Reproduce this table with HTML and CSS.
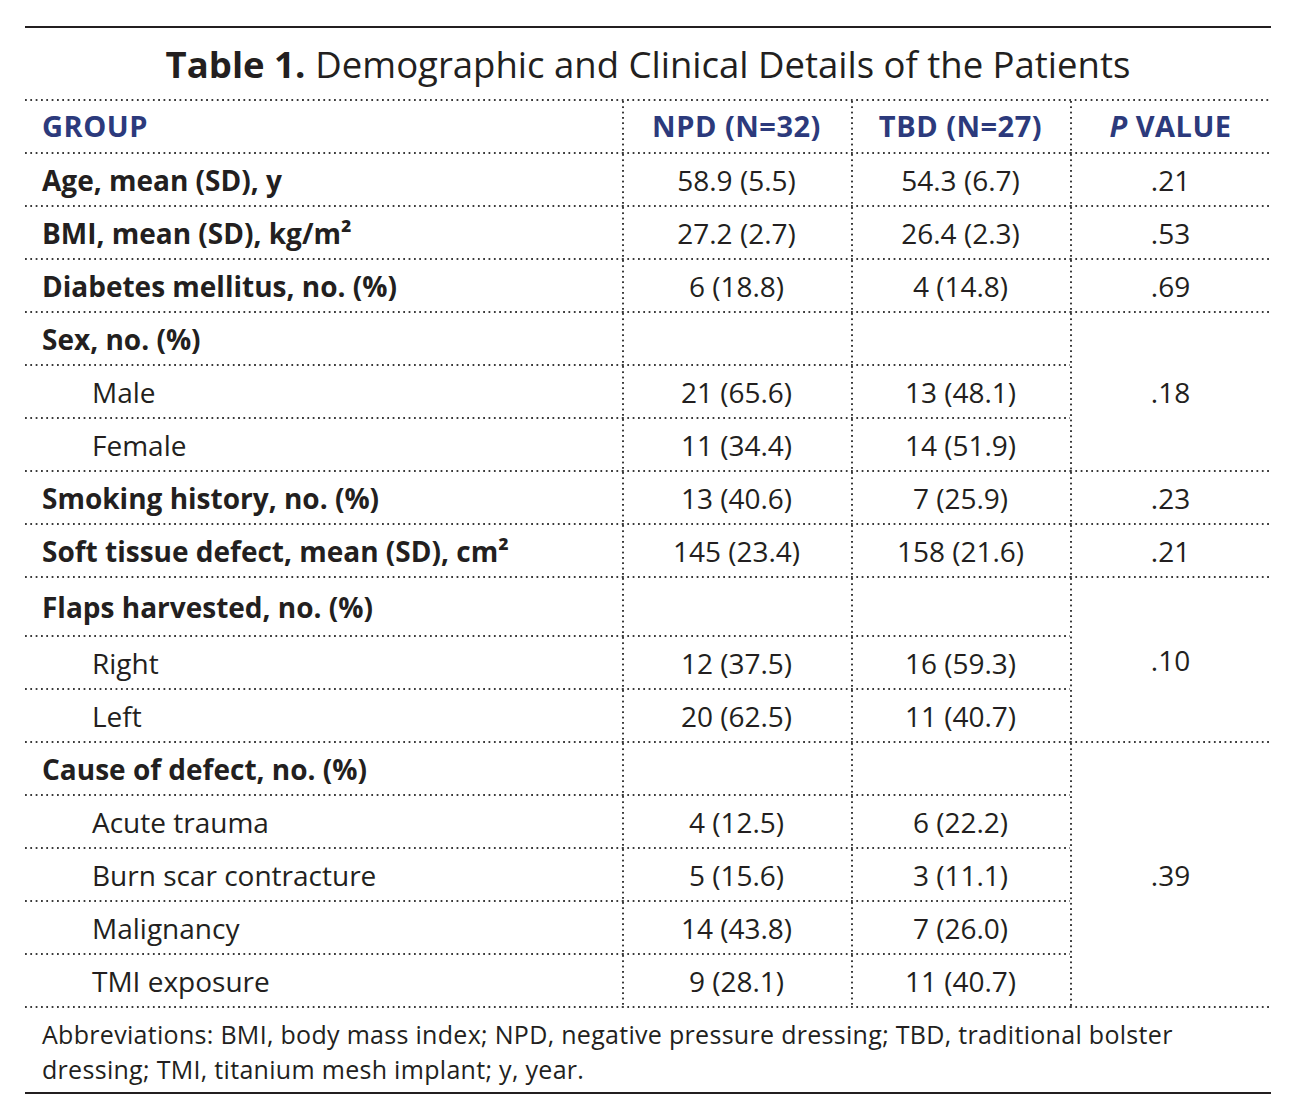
FILE: index.html
```html
<!DOCTYPE html>
<html lang="en">
<head>
<meta charset="utf-8">
<title>Table 1</title>
<link rel="stylesheet" href="styles.css">
</head>
<body>
<div class="page">
  <div class="rule"></div>
  <h1 class="title"><b>Table 1.</b> Demographic and Clinical Details of the Patients</h1>
  <table class="data">
    <colgroup>
      <col class="c-label">
      <col class="c-npd">
      <col class="c-tbd">
      <col class="c-p">
    </colgroup>
    <thead>
      <tr>
        <th class="label">GROUP</th>
        <th class="val vl">NPD (N=32)</th>
        <th class="val vl">TBD (N=27)</th>
        <th class="val vl"><i>P</i> VALUE</th>
      </tr>
    </thead>
    <tbody>
      <tr><td class="label b">Age, mean (SD), y</td><td class="val vl">58.9 (5.5)</td><td class="val vl">54.3 (6.7)</td><td class="val vl">.21</td></tr>
      <tr><td class="label b">BMI, mean (SD), kg/m²</td><td class="val vl">27.2 (2.7)</td><td class="val vl">26.4 (2.3)</td><td class="val vl">.53</td></tr>
      <tr><td class="label b">Diabetes mellitus, no. (%)</td><td class="val vl">6 (18.8)</td><td class="val vl">4 (14.8)</td><td class="val vl">.69</td></tr>
      <tr><td class="label b">Sex, no. (%)</td><td class="val vl"></td><td class="val vl"></td><td class="val vl" rowspan="3">.18</td></tr>
      <tr><td class="label sub">Male</td><td class="val vl">21 (65.6)</td><td class="val vl">13 (48.1)</td></tr>
      <tr><td class="label sub">Female</td><td class="val vl">11 (34.4)</td><td class="val vl">14 (51.9)</td></tr>
      <tr><td class="label b">Smoking history, no. (%)</td><td class="val vl">13 (40.6)</td><td class="val vl">7 (25.9)</td><td class="val vl">.23</td></tr>
      <tr><td class="label b">Soft tissue defect, mean (SD), cm²</td><td class="val vl">145 (23.4)</td><td class="val vl">158 (21.6)</td><td class="val vl">.21</td></tr>
      <tr class="tall"><td class="label b">Flaps harvested, no. (%)</td><td class="val vl"></td><td class="val vl"></td><td class="val vl" rowspan="3">.10</td></tr>
      <tr><td class="label sub">Right</td><td class="val vl">12 (37.5)</td><td class="val vl">16 (59.3)</td></tr>
      <tr><td class="label sub">Left</td><td class="val vl">20 (62.5)</td><td class="val vl">11 (40.7)</td></tr>
      <tr><td class="label b">Cause of defect, no. (%)</td><td class="val vl"></td><td class="val vl"></td><td class="val vl" rowspan="5">.39</td></tr>
      <tr><td class="label sub">Acute trauma</td><td class="val vl">4 (12.5)</td><td class="val vl">6 (22.2)</td></tr>
      <tr><td class="label sub">Burn scar contracture</td><td class="val vl">5 (15.6)</td><td class="val vl">3 (11.1)</td></tr>
      <tr><td class="label sub">Malignancy</td><td class="val vl">14 (43.8)</td><td class="val vl">7 (26.0)</td></tr>
      <tr><td class="label sub">TMI exposure</td><td class="val vl">9 (28.1)</td><td class="val vl">11 (40.7)</td></tr>
    </tbody>
  </table>
  <p class="notes">Abbreviations: BMI, body mass index; NPD, negative pressure dressing; TBD, traditional bolster dressing; TMI, titanium mesh implant; y, year.</p>
  <div class="rule"></div>
</div>
</body>
</html>
```

FILE: styles.css
```css
html, body {
  margin: 0;
  padding: 0;
  background: #ffffff;
}

body {
  font-family: "Open Sans", "Liberation Sans", sans-serif;
  color: #231f20;
}

.page {
  width: 1246px;
  margin-left: 25px;
  padding-top: 26px;
}

.rule {
  height: 2px;
  background: #231f20;
}

.title {
  margin: 0;
  height: 71px;
  display: flex;
  align-items: center;
  justify-content: center;
  font-size: 36.5px;
  font-weight: 400;
  letter-spacing: 0;
}

.title b {
  font-weight: 700;
  margin-right: 10px;
}

.data {
  width: 1246px;
  border-collapse: separate;
  border-spacing: 0;
  table-layout: fixed;
  background-image: linear-gradient(to right, #3a3a3a 0 2px, transparent 2px);
  background-size: 5.33px 2px;
  background-repeat: repeat-x;
  background-position: 0 0;
  padding-top: 2px;
}

.c-label { width: 597px; }
.c-npd { width: 229px; }
.c-tbd { width: 219px; }
.c-p { width: 201px; }

.data th,
.data td {
  height: 53px;
  padding: 0 0 2px;
  box-sizing: border-box;
  vertical-align: middle;
  background-image: linear-gradient(to right, #3a3a3a 0 2px, transparent 2px);
  background-size: 5.33px 2px;
  background-repeat: repeat-x;
  background-position: 0 100%;
  font-size: 28px;
  line-height: 34px;
}

.data .vl {
  background-image:
    linear-gradient(to right, #3a3a3a 0 2px, transparent 2px),
    linear-gradient(to bottom, #3a3a3a 0 2px, transparent 2px);
  background-size: 5.33px 2px, 2px 5.33px;
  background-repeat: repeat-x, repeat-y;
  background-position: 0 100%, 0 0;
}

.data tr.tall td {
  height: 59px;
}

.data th {
  color: #2c3a7c;
  font-weight: 700;
  font-size: 29px;
  letter-spacing: 0.5px;
  padding-bottom: 4px;
}

.label {
  text-align: left;
  padding-left: 17px !important;
}

.label.b {
  font-weight: 700;
  letter-spacing: 0;
}

.label.sub {
  font-weight: 400;
  padding-left: 67px !important;
}

.val {
  text-align: center;
  font-weight: 400;
}

.notes {
  margin: 0;
  padding: 9px 40px 5px 17px;
  font-size: 25px;
  line-height: 35px;
  letter-spacing: 0.3px;
}
```
